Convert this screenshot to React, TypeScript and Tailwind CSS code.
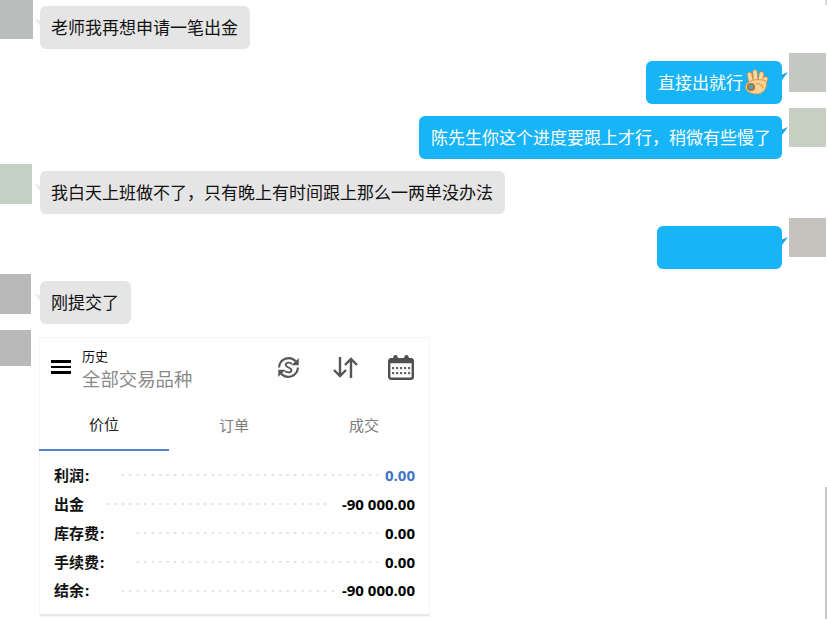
import React from 'react';

const cjk = 'font-["Noto_Sans_CJK_SC","Liberation_Sans",sans-serif]';

function LeftMessage({ text, avatar }: { text: string; avatar: string }) {
  return (
    <div className="flex h-[55px] items-start">
      <div className={`mt-[1px] h-[40px] shrink-0 ${avatar}`} />
      <div className="mt-[8px] flex-1">
        <div className="relative inline-block h-[43px] rounded-[6px] bg-[#e5e5e5] pl-[11px] pr-[12px] text-[17px] leading-[41px] text-[#111]">
          <span className="absolute left-[-6px] top-[12px] h-[8px] w-[6px] bg-[#ececec] [clip-path:polygon(0_0,100%_30%,100%_100%)]" />
          {text}
        </div>
      </div>
    </div>
  );
}

function RightMessage({ children, avatar }: { children?: React.ReactNode; avatar: string }) {
  return (
    <div className="flex h-[55px] items-start justify-end">
      <div className="relative mt-[8px] mr-[7px] flex h-[43px] items-center rounded-[6px] bg-[#17b4f7] pb-[2px] pl-[12px] pr-[11px] text-[17px] text-white">
        <span className="absolute right-[-6px] top-[11px] h-[8px] w-[6px] bg-[#22a6e2] [clip-path:polygon(0_30%,100%_0,0_100%)]" />
        {children}
      </div>
      <div className={`mr-[1px] h-[39px] w-[37px] shrink-0 ${avatar}`} />
    </div>
  );
}

function OkHand() {
  return (
    <svg viewBox="0 0 24 26" className="-my-[2px] mr-[3px] ml-[1px] h-[26px] w-[24px]">
      <path d="M7 13 L5.5 5.5 M11.5 11 L11 3 M16.5 11 L17.5 5 M20 14 L21.5 10" stroke="#c48f4e" strokeWidth="5.4" strokeLinecap="round" />
      <path d="M7 13 L5.5 5.5 M11.5 11 L11 3 M16.5 11 L17.5 5 M20 14 L21.5 10" stroke="#fdd9a0" strokeWidth="3.8" strokeLinecap="round" />
      <path d="M5 13 C9 10 17 10 22 12 C24 17 21 24 14 25 C8 25.5 2 23 1.5 18.5 C1.5 15.5 3 14 5 13 Z" fill="#fbd194" stroke="#c48f4e" strokeWidth="0.8" />
      <circle cx="7" cy="18" r="3.2" fill="#4ba6c4" stroke="#a8743c" strokeWidth="1.8" />
      <path d="M12 15 C15 14 18 16 19 19" stroke="#dc9f5a" strokeWidth="1.2" fill="none" />
    </svg>
  );
}

function SyncDollarIcon() {
  return (
    <svg viewBox="0 0 24 24" className="h-[23px] w-[23px]" fill="none" stroke="#555" strokeWidth="2.2">
      <path d="M2.2 12 A10 10 0 0 1 19.5 5.5" />
      <path d="M21.8 12 A10 10 0 0 1 4.5 18.5" />
      <path d="M22.5 2.5 L22.5 9.5 L15.5 9.5 Z" fill="#555" strokeWidth="0.4" />
      <path d="M1.5 21.5 L1.5 14.5 L8.5 14.5 Z" fill="#555" strokeWidth="0.4" />
      <path d="M15.5 8.5 C14.5 6.5 9.5 6.2 9 9 C8.7 12.5 15.5 11.5 15 15.2 C14.5 17.8 9.5 17.5 8.3 15.5" strokeWidth="1.9" />
    </svg>
  );
}

function SortIcon() {
  return (
    <svg viewBox="0 0 25 21" className="h-[21px] w-[25px]" fill="none" stroke="#555" strokeWidth="2.4">
      <path d="M7 0 L7 19 M1 13 L7 19 L13 13" />
      <path d="M18 21 L18 2 M12 8 L18 2 L24 8" />
    </svg>
  );
}

function CalendarIcon() {
  return (
    <svg viewBox="0 0 26 25" className="h-[25px] w-[26px]">
      <rect x="1.2" y="4.2" width="23.6" height="19.6" rx="2" fill="none" stroke="#505050" strokeWidth="2.4" />
      <rect x="1.2" y="3.2" width="23.6" height="5" rx="1.5" fill="#505050" />
      <circle cx="7.5" cy="2.2" r="2.2" fill="#505050" />
      <circle cx="18.5" cy="2.2" r="2.2" fill="#505050" />
      {[13, 18].map((y) =>
        [5, 9, 13, 17, 21].map((x) => <rect key={`${x}-${y}`} x={x - 1} y={y - 1} width="2.2" height="2.2" fill="#666" />)
      )}
    </svg>
  );
}

const rows = [
  { label: '利润', colon: true, value: '0.00', gap: 'mr-[7px]', color: 'text-[#3f74c9]' },
  { label: '出金', colon: false, value: '-90 000.00', gap: 'mr-[11px]', color: 'text-black' },
  { label: '库存费', colon: true, value: '0.00', gap: 'mr-[7px]', color: 'text-black' },
  { label: '手续费', colon: true, value: '0.00', gap: 'mr-[7px]', color: 'text-black' },
  { label: '结余', colon: true, value: '-90 000.00', gap: 'mr-[4px]', color: 'text-black' },
];

function HistoryCard() {
  return (
    <div className="relative ml-[39px] w-[391px] border border-[#f6f6f6] bg-white">
      <div className="flex h-[62px] items-center">
        <div className="mb-[4px] ml-[11px] flex w-[20px] flex-col gap-[3px]">
          <div className="h-[2.5px] bg-black" />
          <div className="h-[2.5px] bg-black" />
          <div className="h-[2.5px] bg-black" />
        </div>
        <div className="ml-[11px] flex-1">
          <div className="text-[13px] leading-[18px] text-[#111]">历史</div>
          <div className="text-[18.4px] leading-[27px] text-[#8a8a8a]">全部交易品种</div>
        </div>
        <div className="mb-[4px] mr-[15px] flex items-center">
          <SyncDollarIcon />
          <div className="ml-[33px]">
            <SortIcon />
          </div>
          <div className="ml-[30px]">
            <CalendarIcon />
          </div>
        </div>
      </div>
      <div className="flex h-[51px] text-[15px] text-[#7d7d7d]">
        <div className="-ml-[1px] flex flex-1 items-center justify-center border-b-2 border-[#5580c0] pb-[1px] text-[#222]">价位</div>
        <div className="flex flex-1 items-center justify-center pb-[1px]">订单</div>
        <div className="flex flex-1 items-center justify-center pb-[1px]">成交</div>
      </div>
      <div className="border-b-2 border-[#e8e8e8] pt-[10px] pb-[9px] pl-[14px] pr-[14px]">
        {rows.map((row) => (
          <div key={row.label} className="flex h-[28.8px] items-center text-[15px] font-bold">
            <span className="text-[#111]">{row.label}</span>
            {row.colon ? <span className="w-[15px] pl-[1px] font-['Open_Sans',sans-serif]">:</span> : null}
            <span className={`ml-[20px] h-[4px] flex-1 bg-[radial-gradient(circle,#e2e2e2_1.1px,transparent_1.6px)] bg-[length:7.5px_4px] bg-repeat-x ${row.gap}`} />
            <span className={`font-["Open_Sans",sans-serif] ${row.color}`}>{row.value}</span>
          </div>
        ))}
      </div>
    </div>
  );
}

export default function App() {
  return (
    <div className={`relative h-[619px] w-[827px] overflow-hidden bg-white ${cjk}`}>
      <div className="-mt-[2px]">
        <LeftMessage text="老师我再想申请一笔出金" avatar="w-[33px] mr-[7px] bg-[#b9bdbc]" />
        <RightMessage avatar="bg-[#c5c8c2]">
          直接出就行
          <OkHand />
        </RightMessage>
        <RightMessage avatar="bg-[#c8d0c4]">陈先生你这个进度要跟上才行，稍微有些慢了</RightMessage>
        <LeftMessage text="我白天上班做不了，只有晚上有时间跟上那么一两单没办法" avatar="w-[32px] mr-[8px] bg-[#c4d1c6]" />
        <RightMessage avatar="bg-[#c6c3be]">
          <div className="w-[102px]" />
        </RightMessage>
        <LeftMessage text="刚提交了" avatar="w-[31px] mr-[9px] bg-[#b9b9b9]" />
        <div className="mt-[2px] flex flex-col">
          <div className="h-[36px] w-[31px] bg-[#b9b9b9]" />
          <div className="-mt-[29px]">
            <HistoryCard />
          </div>
        </div>
      </div>
      <div className="absolute right-0 top-[487px] h-[132px] w-[2px] bg-[#c8c8c8]" />
      <div className="absolute right-0 top-0 h-[5px] w-[2px] bg-[#d8d8d8]" />
    </div>
  );
}
